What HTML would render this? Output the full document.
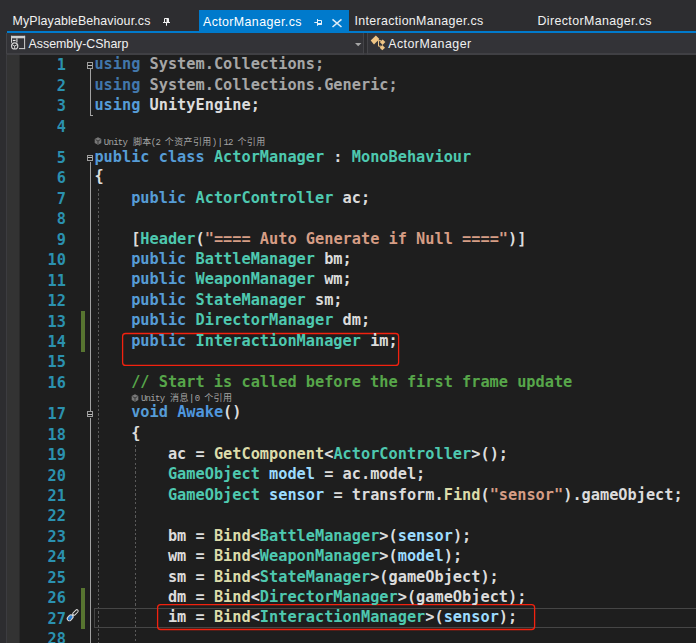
<!DOCTYPE html>
<html lang="zh">
<head>
<meta charset="utf-8">
<title>ActorManager.cs</title>
<style>
html,body{margin:0;padding:0;background:#1e1e1e;}
body{width:696px;height:643px;position:relative;overflow:hidden;font-family:"Liberation Sans","Noto Sans CJK SC",sans-serif;}
#tabs{position:absolute;left:0;top:0;width:696px;height:31px;background:#2d2d30;}
#tabline{position:absolute;left:7px;top:31px;width:689px;height:2px;background:#007acc;}
.tab{position:absolute;top:10px;height:21px;line-height:23px;font-size:12.4px;color:#f1f1f1;white-space:nowrap;}
.tab.active{background:#007acc;color:#fff;line-height:25px;}
#nav{position:absolute;left:7px;top:33px;width:689px;height:22px;box-sizing:border-box;background:#2d2d30;border-bottom:2px solid #3c3c40;}
#nav .box{position:absolute;top:0;height:22px;box-sizing:border-box;background:#333337;border:1px solid #444448;border-top:0;border-bottom:2px solid #404044;}
#nav .txt{position:absolute;top:0;height:21px;line-height:22px;font-size:12.4px;color:#f1f1f1;white-space:nowrap;}
#leftstrip{position:absolute;left:0;top:0;width:7px;height:643px;background:#2d2d30;}
#leftedge{position:absolute;left:5.8px;top:54px;width:1.4px;height:589px;background:#3c3c40;}
#margin{position:absolute;left:7px;top:55px;width:12px;height:588px;background:#333333;}
#editor{position:absolute;left:19px;top:55px;width:677px;height:588px;background:#1e1e1e;}
.ln,.cl{position:absolute;height:20px;line-height:20px;font-family:"DejaVu Sans Mono","Liberation Mono",monospace;font-weight:bold;font-size:15.28px;white-space:pre;}
.ln{left:18px;width:48px;text-align:right;color:#2b91af;}
.cl{left:94.4px;color:#dcdcdc;}
.k{color:#569cd6}.t{color:#4ec9b0}.s{color:#d69d85}.c{color:#57a64a}.v{color:#9cdcfe}.m{color:#dcdcaa}
.u{color:#4f97de}.fk{color:#4277ab}.fp{color:#a6a6a6}
.lens{position:absolute;left:103.8px;font-family:"Liberation Mono","Noto Sans CJK SC",monospace;font-size:9px;letter-spacing:-0.71px;color:#a4a4a4;white-space:pre;height:12px;line-height:12px;}
.lens b{font-weight:normal;font-family:"Noto Sans CJK SC","Liberation Mono",sans-serif;font-size:9px;letter-spacing:0.38px;}
.lens b.f{position:relative;left:1px}
.lens .sp{display:inline-block;width:7px;text-align:center;color:#b4b4b4;letter-spacing:0;position:relative;left:0.3px}
.guide{position:absolute;width:1px;background:repeating-linear-gradient(to bottom,#5a5a5a 0,#5a5a5a 2.2px,transparent 2.2px,transparent 4.4px);}
.oline{position:absolute;left:90px;width:1.25px;background:#a2a2a2;}
.ohook{position:absolute;left:90px;width:3.3px;height:1px;background:#a5a5a5;}
.obox{position:absolute;left:87px;width:6px;height:6px;box-sizing:border-box;border:1px solid #9e9e9e;background:#1e1e1e;}
.obox i{position:absolute;left:0;top:1px;width:4px;height:1px;background:#bdbdbd;}
.chg{position:absolute;left:81px;width:4px;background:#577430;}
.redbox{position:absolute;border:1.4px solid #f3220f;border-radius:3px;box-sizing:border-box;}
#curline{position:absolute;left:94px;top:608px;width:610px;height:20px;box-sizing:border-box;border:1px solid #464646;}
svg{position:absolute;overflow:visible;}
</style>
</head>
<body>
<div id="tabs"></div>
<div id="leftstrip"></div>
<div class="tab" style="left:12.5px;letter-spacing:0.135px">MyPlayableBehaviour.cs</div>
<div class="tab active" style="left:199px;width:150px"><span style="margin-left:4px;letter-spacing:0.39px">ActorManager.cs</span></div>
<div class="tab" style="left:354.5px;letter-spacing:0.34px">InteractionManager.cs</div>
<div class="tab" style="left:537.5px;letter-spacing:0.385px">DirectorManager.cs</div>
<!-- pin (vertical) on first tab -->
<svg style="left:162px;top:17px" width="9" height="10" viewBox="0 0 9 10"><path d="M2.5 1.5h4v4h-4z M1 5.5h7 M4.5 5.5v3.2" fill="none" stroke="#f1f1f1" stroke-width="1"/><path d="M5.5 1.5v4" stroke="#f1f1f1" stroke-width="2"/></svg>
<!-- pin (horizontal) on active tab -->
<svg style="left:313px;top:18px" width="10" height="9" viewBox="0 0 10 9"><path d="M1.3 4.5h3.2 M4.5 1v6.8 M4.5 2.5h4v4h-4" fill="none" stroke="#e4f1fa" stroke-width="1"/><path d="M4.5 6h4" stroke="#e4f1fa" stroke-width="2"/></svg>
<!-- close x -->
<svg style="left:332px;top:19px" width="10" height="9" viewBox="0 0 10 9"><path d="M0.5 0.4L9.5 8M9.5 0.4L0.5 8" fill="none" stroke="#dcecf8" stroke-width="1.55"/></svg>
<div id="tabline"></div>
<div id="nav">
  <div class="box" style="left:-1px;width:358px"></div>
  <div class="box" style="left:360px;width:340px"></div>
  <div class="txt" style="left:21.5px;letter-spacing:0px">Assembly-CSharp</div>
  <div class="txt" style="left:381.2px;letter-spacing:0.47px">ActorManager</div>
</div>
<!-- project icon -->
<svg style="left:4px;top:32px" width="28" height="22" viewBox="0 0 28 22"><g fill="#cfcfcf"><rect x="7" y="3.8" width="14.1" height="2.5"/><rect x="7" y="3.8" width="1" height="7"/><rect x="20.1" y="3.8" width="1" height="13.3"/><rect x="15" y="16.1" width="6.1" height="1"/><rect x="12.3" y="6.3" width="1.2" height="4.2"/><rect x="8.8" y="7.9" width="2.8" height="1.2" fill="#e6e6e6"/></g><circle cx="10.66" cy="13.9" r="3.1" fill="#2b2b2e" stroke="#d2d2d2" stroke-width="1.2"/><path d="M10.66 14V17 M8.2 12.7L10.66 14L13.1 12.7" fill="none" stroke="#cfcfcf" stroke-width="1"/></svg>
<!-- dropdown arrow -->
<svg style="left:354.8px;top:42.9px" width="7" height="4" viewBox="0 0 7 4"><path d="M0 0h6.4L3.2 3.3z" fill="#a6a6a6"/></svg>
<!-- class icon -->
<svg style="left:366px;top:32px" width="28" height="22" viewBox="0 0 28 22"><g fill="#f0c585"><path d="M9.85 3.5L13.4 7.0L8.0 12.4L4.7 8.6z"/><path d="M16.6 7.4L19.4 10.1L16.6 12.9L13.8 10.1z"/><path d="M16.3 13.1L19 15.7L16.3 18.3L13.7 15.7z"/></g><path d="M11.5 8.7H15 M12.5 8.7V14.2H15.2" fill="none" stroke="#f0c585" stroke-width="1"/></svg>
<div id="margin"></div>
<div id="leftedge"></div>
<div id="editor"></div>
<div style="position:absolute;left:19px;top:55px;width:1px;height:588px;background:#2a2a2a"></div>
<div class="chg" style="top:311px;height:41px"></div>
<div class="chg" style="top:588px;height:41px"></div>
<div class="oline" style="top:69px;height:47px"></div><div class="ohook" style="top:115px"></div>
<div class="obox" style="top:62px;height:7px"><i style="top:2px"></i></div>
<div class="oline" style="top:161.5px;height:249px"></div><div class="oline" style="top:417.5px;height:226px"></div>
<div class="obox" style="top:155px"><i></i></div>
<div class="obox" style="top:411px"><i style="top:2px"></i></div>
<div class="guide" style="left:98px;top:188.7px;height:456px"></div>
<div class="guide" style="left:135px;top:444.9px;height:200px"></div>
<div id="curline"></div>
<svg style="left:0;top:0" width="696" height="643" viewBox="0 0 696 643"><g fill="none" stroke="#f3220f" stroke-width="1.3"><rect x="122.6" y="333.5" width="276" height="31.9" rx="3"/><rect x="157.6" y="604.6" width="377" height="24.9" rx="3"/></g></svg>
<div class="lens" style="top:135.6px">Unity <b class="f">脚本</b>(2 <b>个资产引用</b>)<span class="sp">|</span>12 <b>个引用</b></div>
<div class="lens" style="top:392px;left:140.9px">Unity <b class="f">消息</b><span class="sp">|</span>0 <b>个引用</b></div>
<svg style="left:94px;top:137.3px" width="8" height="8" viewBox="0 0 8 8"><path d="M4 0.3L7.3 2.1V5.9L4 7.7L0.7 5.9V2.1z" fill="#787878"/><path d="M4 4V7 M1.6 2.6L4 4L6.4 2.6" stroke="#333" stroke-width="0.9" fill="none"/></svg>
<svg style="left:131px;top:393.8px" width="8" height="8" viewBox="0 0 8 8"><path d="M4 0.3L7.3 2.1V5.9L4 7.7L0.7 5.9V2.1z" fill="#787878"/><path d="M4 4V7 M1.6 2.6L4 4L6.4 2.6" stroke="#333" stroke-width="0.9" fill="none"/></svg>
<svg style="left:60px;top:602px" width="24" height="24" viewBox="0 0 24 24"><g transform="translate(10.3 15.6) rotate(-45)"><rect x="4" y="-1.35" width="6.6" height="2.7" rx="1.35" fill="#1e1e1e" stroke="#dadada" stroke-width="1"/><path d="M2.6 -1.2L4.4 -0.6V0.6L2.6 1.2z" fill="#d4d4d4"/><rect x="-3.4" y="-2.1" width="6.4" height="4.2" rx="2.1" fill="#2c7ed0" stroke="#dadada" stroke-width="1.1"/><path d="M-2.6 -0.2Q-2.8 1.3 -1 1.4" stroke="#0b4fa0" stroke-width="0.9" fill="none"/></g></svg>
<div class="ln" style="top:54.72px">1</div>
<div class="cl" style="top:53.72px"><span class="fk">using</span><span class="fp"> System.Collections;</span></div>
<div class="ln" style="top:75.72px">2</div>
<div class="cl" style="top:74.72px"><span class="fk">using</span><span class="fp"> System.Collections.Generic;</span></div>
<div class="ln" style="top:95.72px">3</div>
<div class="cl" style="top:94.72px"><span class="k">using</span> UnityEngine;</div>
<div class="ln" style="top:116.72px">4</div>
<div class="ln" style="top:147.72px">5</div>
<div class="cl" style="top:146.72px"><span class="k">public class </span><span class="t">ActorManager</span> : <span class="t">MonoBehaviour</span></div>
<div class="ln" style="top:167.72px">6</div>
<div class="cl" style="top:165.72px">{</div>
<div class="ln" style="top:188.72px">7</div>
<div class="cl" style="top:187.72px">    <span class="k">public </span><span class="t">ActorController</span> ac;</div>
<div class="ln" style="top:208.72px">8</div>
<div class="ln" style="top:229.72px">9</div>
<div class="cl" style="top:228.72px">    [<span class="t">Header</span>(<span class="s">&quot;==== Auto Generate if Null ====&quot;</span>)]</div>
<div class="ln" style="top:249.72px">10</div>
<div class="cl" style="top:248.72px">    <span class="k">public </span><span class="t">BattleManager</span> bm;</div>
<div class="ln" style="top:270.72px">11</div>
<div class="cl" style="top:268.72px">    <span class="k">public </span><span class="t">WeaponManager</span> wm;</div>
<div class="ln" style="top:290.72px">12</div>
<div class="cl" style="top:289.72px">    <span class="k">public </span><span class="t">StateManager</span> sm;</div>
<div class="ln" style="top:311.72px">13</div>
<div class="cl" style="top:309.72px">    <span class="k">public </span><span class="t">DirectorManager</span> dm;</div>
<div class="ln" style="top:331.72px">14</div>
<div class="cl" style="top:330.72px">    <span class="k">public </span><span class="t">InteractionManager</span> im;</div>
<div class="ln" style="top:351.72px">15</div>
<div class="ln" style="top:372.72px">16</div>
<div class="cl" style="top:371.72px">    <span class="c">// Start is called before the first frame update</span></div>
<div class="ln" style="top:403.72px">17</div>
<div class="cl" style="top:401.72px">    <span class="k">void </span><span class="u">Awake</span>()</div>
<div class="ln" style="top:424.72px">18</div>
<div class="cl" style="top:422.72px">    {</div>
<div class="ln" style="top:444.72px">19</div>
<div class="cl" style="top:443.72px">        ac = <span class="m">GetComponent</span>&lt;<span class="t">ActorController</span>&gt;();</div>
<div class="ln" style="top:465.72px">20</div>
<div class="cl" style="top:463.72px">        <span class="t">GameObject</span> <span class="v">model</span> = ac.model;</div>
<div class="ln" style="top:485.72px">21</div>
<div class="cl" style="top:484.72px">        <span class="t">GameObject</span> <span class="v">sensor</span> = transform.<span class="m">Find</span>(<span class="s">&quot;sensor&quot;</span>).gameObject;</div>
<div class="ln" style="top:505.72px">22</div>
<div class="ln" style="top:526.72px">23</div>
<div class="cl" style="top:525.72px">        bm = <span class="m">Bind</span>&lt;<span class="t">BattleManager</span>&gt;(<span class="v">sensor</span>);</div>
<div class="ln" style="top:546.72px">24</div>
<div class="cl" style="top:545.72px">        wm = <span class="m">Bind</span>&lt;<span class="t">WeaponManager</span>&gt;(<span class="v">model</span>);</div>
<div class="ln" style="top:567.72px">25</div>
<div class="cl" style="top:566.72px">        sm = <span class="m">Bind</span>&lt;<span class="t">StateManager</span>&gt;(gameObject);</div>
<div class="ln" style="top:587.72px">26</div>
<div class="cl" style="top:586.72px">        dm = <span class="m">Bind</span>&lt;<span class="t">DirectorManager</span>&gt;(gameObject);</div>
<div class="ln" style="top:608.72px">27</div>
<div class="cl" style="top:606.72px">        im = <span class="m">Bind</span>&lt;<span class="t">InteractionManager</span>&gt;(<span class="v">sensor</span>);</div>
<div class="ln" style="top:628.72px">28</div>
</body>
</html>
